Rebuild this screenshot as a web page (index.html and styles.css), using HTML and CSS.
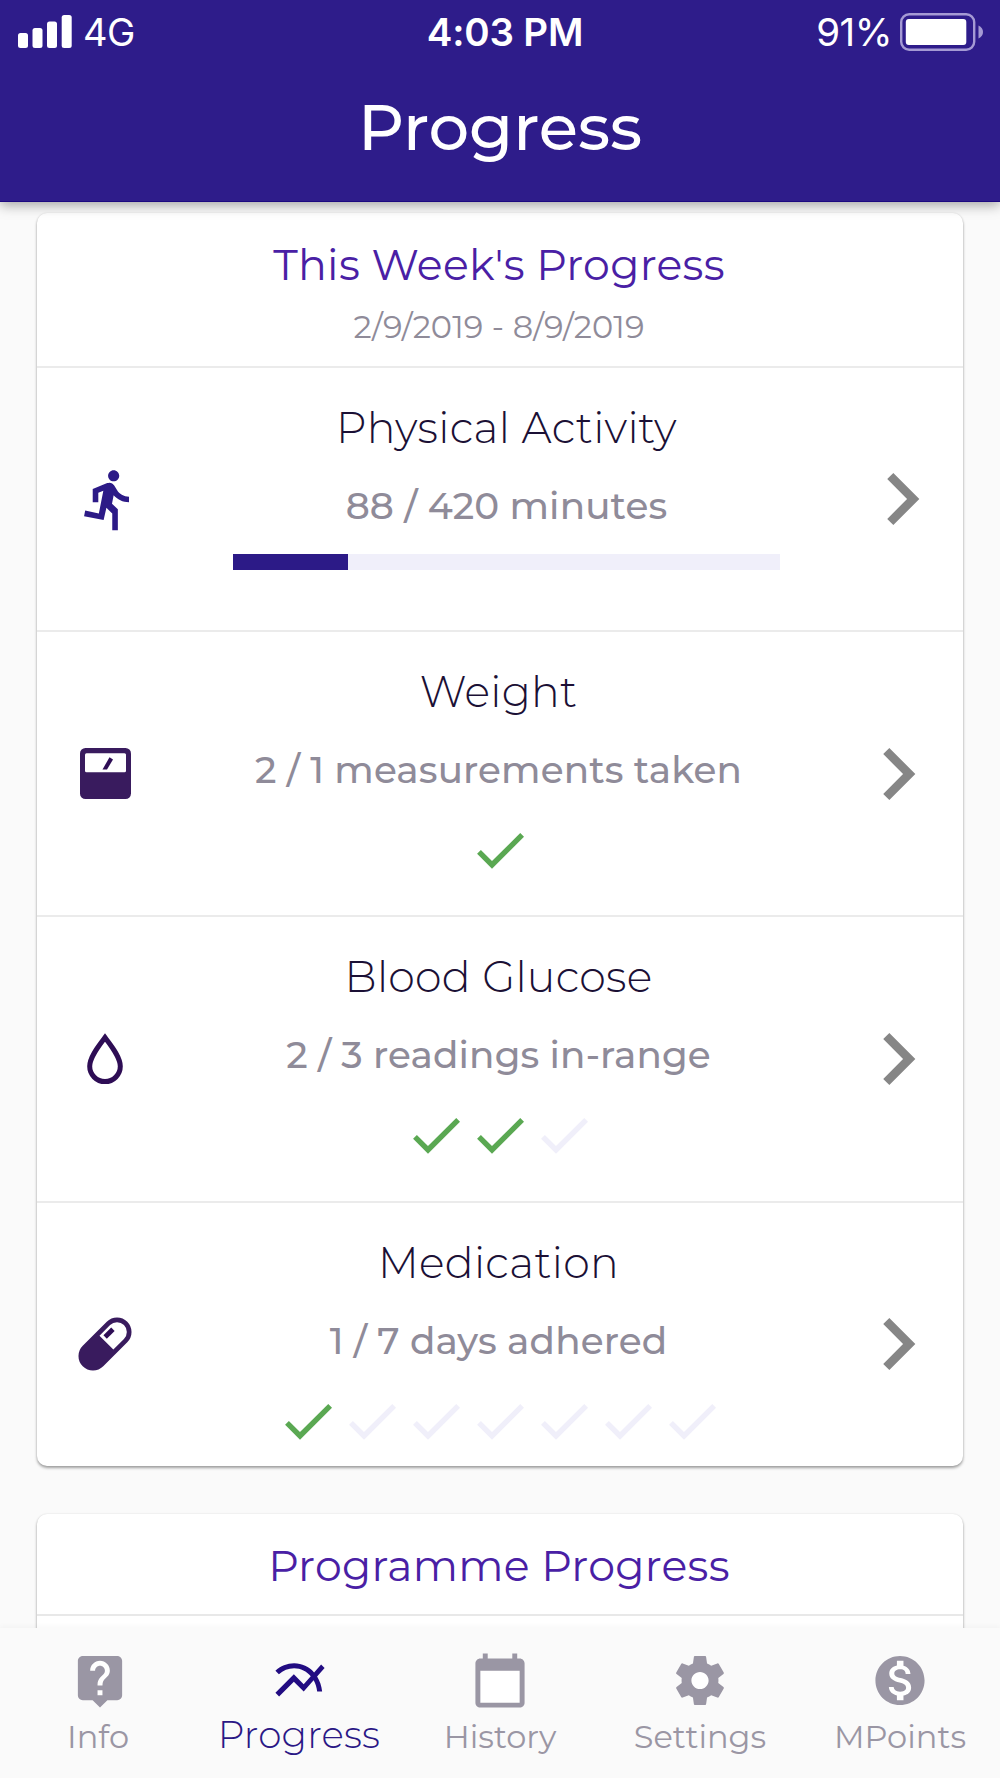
FILE: index.html
```
<!DOCTYPE html>
<html lang="en">
<head>
<meta charset="utf-8">
<title>Progress</title>
<link rel="stylesheet" href="styles.css">
</head>
<body>
<svg class="defs" aria-hidden="true">
  <symbol id="check" viewBox="0 0 24 24"><path d="M9 16.17L4.83 12l-1.42 1.41L9 19 21 7l-1.41-1.41z"/></symbol>
  <symbol id="chevron" viewBox="0 0 24 24"><path d="M10 6L8.59 7.41 13.17 12l-4.58 4.59L10 18l6-6z"/></symbol>
</svg>
<div class="app">
  <header class="header">
    <div class="status">
      <div class="status-left">
        <svg class="signal" width="54" height="34" viewBox="0 0 54 34"><rect x="0" y="18" width="10" height="15" rx="2.5"/><rect x="14.5" y="13" width="10" height="20" rx="2.5"/><rect x="29" y="6.5" width="10" height="26.5" rx="2.5"/><rect x="43.7" y="0" width="10" height="33" rx="2.5"/></svg>
        <span class="network">4G</span>
      </div>
      <span class="time">4:03 PM</span>
      <div class="status-right">
        <span class="percent">91%</span>
        <svg class="battery" width="84" height="38" viewBox="0 0 84 38"><rect x="1.2" y="1.2" width="73" height="35.6" rx="8" fill="none" stroke="#a59ad4" stroke-width="2.4"/><rect x="5.8" y="6" width="60.5" height="26" rx="3" fill="#fff"/><path d="M78.5 12.5c6 2.500 6 10.500 0 13z" fill="#a59ad4"/></svg>
      </div>
    </div>
    <h1 class="title">Progress</h1>
  </header>

  <main class="content">
    <section class="card">
      <div class="card-head">
        <h2 class="heading">This Week's Progress</h2>
        <p class="dates">2/9/2019 - 8/9/2019</p>
      </div>

      <div class="row row-activity">
        <div class="icon"><svg width="67" height="67" viewBox="0 0 24 24" fill="#2c1a87"><path d="M13.490 5.480c1.100 0 2-.9 2-2s-.9-2-2-2-2 .9-2 2 .9 2 2 2zm-3.600 13.900l1-4.400 2.100 2v6h2v-7.500l-2.100-2 .6-3c1.300 1.500 3.300 2.500 5.500 2.500v-2c-1.900 0-3.500-1-4.300-2.400l-1-1.600c-.4-.6-1-1-1.700-1-.3 0-.5.1-.8.1l-5.200 2.200v4.700h2v-3.400l1.800-.7-1.600 8.100-4.900-1-.4 2 7 1.400z"/></svg></div>
        <div class="body">
          <h3 class="name">Physical Activity</h3>
          <p class="detail">88 / 420 minutes</p>
          <div class="bar"><div class="fill" style="width:21%"></div></div>
        </div>
        <div class="go"><svg width="104" height="104"><use href="#chevron"/></svg></div>
      </div>

      <div class="row">
        <div class="icon"><svg width="51" height="51" viewBox="0 0 51 51"><rect width="51" height="51" rx="5.500" fill="#391b5e"/><rect x="5" y="5.300" width="41" height="19" rx="1.500" fill="#fff"/><path d="M29.500 9.300L33 11.500 27 21.500H22.500z" fill="#2e0d55"/></svg></div>
        <div class="body">
          <h3 class="name">Weight</h3>
          <p class="detail">2 / 1 measurements taken</p>
          <div class="checks"><svg class="done"><use href="#check"/></svg></div>
        </div>
        <div class="go"><svg width="104" height="104"><use href="#chevron"/></svg></div>
      </div>

      <div class="row">
        <div class="icon"><svg width="36" height="52" viewBox="0 0 36 52"><path d="M18 4.500C13 11.500 2.700 23.500 2.700 33.300a15.300 15.300 0 0 0 30.600 0C33.300 23.500 23 11.500 18 4.500z" fill="#fff" stroke="#2e0d55" stroke-width="5"/></svg></div>
        <div class="body">
          <h3 class="name">Blood Glucose</h3>
          <p class="detail">2 / 3 readings in-range</p>
          <div class="checks"><svg class="done"><use href="#check"/></svg><svg class="done"><use href="#check"/></svg><svg><use href="#check"/></svg></div>
        </div>
        <div class="go"><svg width="104" height="104"><use href="#chevron"/></svg></div>
      </div>

      <div class="row">
        <div class="icon"><svg width="54" height="54" viewBox="0 0 54 54"><g transform="rotate(45 27 27)"><rect x="12.500" y="-4.500" width="29" height="63" rx="14.500" fill="#391b5e"/><path d="M17.200 25V10a9.800 9.800 0 0 1 19.600 0V25z" fill="#fff"/><path d="M19.800 11h4.800v11h-4.800z" fill="#2e0d55"/></g></svg></div>
        <div class="body">
          <h3 class="name">Medication</h3>
          <p class="detail">1 / 7 days adhered</p>
          <div class="checks"><svg class="done"><use href="#check"/></svg><svg><use href="#check"/></svg><svg><use href="#check"/></svg><svg><use href="#check"/></svg><svg><use href="#check"/></svg><svg><use href="#check"/></svg><svg><use href="#check"/></svg></div>
        </div>
        <div class="go"><svg width="104" height="104"><use href="#chevron"/></svg></div>
      </div>
    </section>

    <section class="card card-programme">
      <h2 class="heading">Programme Progress</h2>
    </section>
  </main>

  <nav class="tabs">
    <a class="tab"><svg viewBox="0 0 24 24"><path fill="#fff" d="M7 3h10v15H7z"/><path d="M19 2H5c-1.100 0-2 .9-2 2v14c0 1.100.9 2 2 2h4l3 3 3-3h4c1.100 0 2-.9 2-2V4c0-1.100-.9-2-2-2zm-6 16h-2v-2h2v2zm2.070-7.750l-.9.920C13.450 11.900 13 12.500 13 14h-2v-.5c0-1.100.45-2.100 1.170-2.830l1.240-1.260c.37-.36.59-.86.59-1.410 0-1.100-.9-2-2-2s-2 .9-2 2H8c0-2.210 1.790-4 4-4s4 1.790 4 4c0 .88-.36 1.680-.93 2.250z"/></svg><span class="label label-info">Info</span></a>
    <a class="tab tab-active"><svg viewBox="0 0 24 24"><path d="M22 6.920l-1.410-1.410-2.850 3.210C15.680 6.400 12.830 5 9.610 5 6.720 5 4.070 6.160 2 8l1.420 1.420C5.120 7.930 7.270 7 9.610 7c2.740 0 5.090 1.260 6.770 3.240l-2.880 3.240-4-4L2 16.990l1.500 1.500 6-6.010 4 4 4.050-4.550c.75 1.350 1.250 2.900 1.440 4.550H21c-.22-2.300-.95-4.390-2.040-6.140L22 6.920z"/></svg><span class="label label-progress">Progress</span></a>
    <a class="tab"><svg viewBox="0 0 24 24"><path fill="#fff" d="M4 8h16v13H4z"/><path d="M20 3h-1V1h-2v2H7V1H5v2H4c-1.100 0-2 .9-2 2v16c0 1.100.9 2 2 2h16c1.100 0 2-.9 2-2V5c0-1.100-.9-2-2-2zm0 18H4V8h16v13z"/></svg><span class="label">History</span></a>
    <a class="tab"><svg viewBox="0 0 24 24"><circle cx="12" cy="12" r="4" fill="#fff"/><path d="M19.430 12.980c.04-.32.07-.64.07-.98s-.03-.66-.07-.98l2.110-1.650c.19-.15.24-.42.12-.64l-2-3.460c-.12-.22-.39-.3-.61-.22l-2.490 1c-.52-.4-1.080-.73-1.690-.98l-.38-2.650C14.460 2.180 14.250 2 14 2h-4c-.25 0-.46.18-.49.42l-.38 2.650c-.61.25-1.170.59-1.690.98l-2.490-1c-.23-.09-.49 0-.61.22l-2 3.460c-.13.22-.07.49.12.64l2.110 1.650c-.04.32-.07.65-.07.98s.03.66.07.98l-2.110 1.650c-.19.15-.24.42-.12.64l2 3.460c.12.22.39.3.61.22l2.490-1c.52.4 1.080.73 1.690.98l.38 2.650c.03.24.24.42.49.42h4c.25 0 .46-.18.49-.42l.38-2.650c.61-.25 1.170-.59 1.690-.98l2.490 1c.23.09.49 0 .61-.22l2-3.460c.12-.22.07-.49-.12-.64l-2.110-1.650zM12 15.500c-1.930 0-3.500-1.570-3.500-3.500s1.570-3.500 3.500-3.500 3.500 1.570 3.500 3.500-1.570 3.500-3.500 3.500z"/></svg><span class="label">Settings</span></a>
    <a class="tab"><svg viewBox="0 0 24 24"><path fill="#fff" d="M7 3.500h10v17H7z"/><path d="M12 2C6.480 2 2 6.480 2 12s4.480 10 10 10 10-4.480 10-10S17.520 2 12 2zm1.410 16.090V20h-2.670v-1.930c-1.710-.36-3.160-1.460-3.270-3.400h1.960c.1 1.050.82 1.870 2.650 1.870 1.960 0 2.400-.98 2.400-1.590 0-.83-.44-1.610-2.670-2.140-2.480-.6-4.180-1.620-4.180-3.670 0-1.720 1.390-2.840 3.110-3.210V4h2.670v1.950c1.860.45 2.790 1.860 2.850 3.390H14.300c-.05-1.110-.64-1.870-2.220-1.870-1.500 0-2.400.68-2.400 1.640 0 .84.65 1.390 2.670 1.910s4.180 1.390 4.180 3.910c-.01 1.830-1.380 2.830-3.120 3.160z"/></svg><span class="label">MPoints</span></a>
  </nav>
</div>
</body>
</html>
```
FILE: styles.css
```
* { box-sizing: border-box; }

body {
  margin: 0;
  background: #fafafa;
  font-family: Montserrat, Inter, sans-serif;
}

h1, h2, h3, p { margin: 0; }
svg { display: block; flex: none; }
.defs { display: none; }

.app {
  display: flex;
  flex-direction: column;
  width: 1000px;
  height: 1778px;
  overflow: hidden;
}

/* Header */
.header {
  z-index: 1;
  flex: none;
  height: 202px;
  background: #2e1c8a;
  border-bottom: 1px solid #1c0880;
  box-shadow: 0 3px 12px rgba(0, 0, 0, .36);
  color: #fff;
}

.status {
  display: grid;
  grid-template-columns: 1fr auto 1fr;
  align-items: center;
  height: 64px;
  padding: 0 16px 0 18px;
  font-family: Inter, sans-serif;
  font-size: 38.500px;
}

.status-left, .status-right { display: flex; align-items: center; }
.status-left { gap: 11px; }
.status-right { justify-content: flex-end; gap: 8px; }
.signal { fill: #fff; }
.network { font-size: 38px; letter-spacing: -.5px; }
.time { padding-left: 8px; font-weight: 600; letter-spacing: -.2px; }
.percent { letter-spacing: -.5px; }

.title {
  font-size: 64px;
  font-weight: 500;
  line-height: 126px;
  text-align: center;
}

/* Cards */
.content {
  flex: 1;
  min-height: 0;
  padding: 11px 37px 0;
  overflow: hidden;
}

.card {
  height: 1253px;
  border-radius: 10px;
  background: #fff;
  box-shadow: 0 2px 3px rgba(0, 0, 0, .36), 0 0 2px rgba(0, 0, 0, .1);
  text-align: center;
}

.card-head { height: 153px; padding: 27px 2px 0 0; }

.heading {
  color: #4a1fa5;
  font-size: 42.670px;
  font-weight: 420;
  line-height: 50px;
  letter-spacing: .3px;
}

.dates {
  padding-top: 17px;
  color: #8f8b99;
  font-size: 32px;
  font-weight: 430;
  line-height: 40px;
  letter-spacing: .1px;
}

.row {
  display: grid;
  grid-template-columns: 136px 651px 139px;
  height: 285.300px;
  border-top: 2px solid #ebebeb;
}
.row-activity { grid-template-columns: 145px 649px 132px; height: 264px; }

.icon, .go { display: flex; align-items: center; justify-content: center; }
.go { padding-left: 9px; fill: #868686; }

.body { padding-top: 36px; }

.name {
  color: #1b1035;
  font-size: 42.670px;
  font-weight: 330;
  line-height: 48px;
  letter-spacing: .3px;
}

.detail {
  margin-top: 32px;
  color: #8f8b99;
  font-size: 37.330px;
  font-weight: 460;
  line-height: 44px;
  letter-spacing: .14px;
}

.bar {
  width: 547px;
  height: 16px;
  margin: 26px auto 0;
  background: #f0effa;
}
.fill { height: 100%; background: #2c1a87; }

.checks {
  display: flex;
  justify-content: center;
  margin-top: 26px;
  padding-left: 2px;
  fill: #f0effa;
}
.checks svg { width: 64px; height: 64px; }
.checks .done { fill: #5aa852; }

.card-programme { height: 300px; margin-top: 48px; }
.card-programme .heading {
  height: 102px;
  padding: 27px 2px 0 0;
  border-bottom: 2px solid #e8e8e8;
}

/* Bottom tabs */
.tabs {
  z-index: 1;
  display: grid;
  grid-template-columns: repeat(5, 1fr);
  flex: none;
  height: 150px;
  padding-top: 23px;
  background: #fafafa;
  box-shadow: 0 -2px 5px rgba(0, 0, 0, .03);
}

.tab {
  display: flex;
  flex-direction: column;
  align-items: center;
  color: #9a96a4;
}
.tab svg { width: 60px; height: 59px; fill: #9a96a4; }

.label {
  margin-top: 7px;
  font-size: 32px;
  font-weight: 380;
  line-height: 40px;
  white-space: nowrap;
}
.label-info { padding-right: 4px; }
.label-progress {
  margin-top: 5px;
  padding-right: 2px;
  color: #2a1785;
  font-size: 37.330px;
  font-weight: 350;
  letter-spacing: .2px;
}
.tab-active svg { fill: #220c82; }
```
